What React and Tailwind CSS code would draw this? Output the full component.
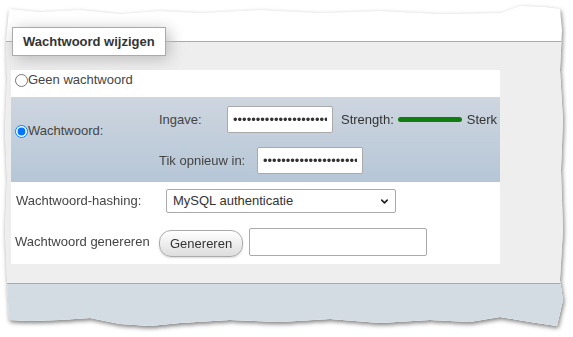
import React from 'react';
import { ChevronDown } from 'lucide-react';

// torn paper outline (page coordinates)
const EDGE = [
  [9, 9], [40, 12], [80, 10], [120, 14], [160, 11], [200, 13], [260, 10], [320, 13], [380, 11], [440, 14], [500, 13], [520, 6], [545, 7], [560, 9],
  [562, 30], [560, 70], [563, 120], [561, 170], [563, 230], [560, 280], [563, 300], [557, 326],
  [530, 322], [500, 317], [470, 322], [430, 320], [380, 323], [330, 319], [280, 322], [230, 320], [180, 323], [150, 326], [120, 324], [90, 318], [60, 320], [30, 321], [9, 320],
  [7, 280], [5, 230], [7, 180], [5, 130], [7, 80], [6, 40],
];

const clip = `polygon(${EDGE.map(([x, y]) => `${x}px ${y}px`).join(', ')})`;

function Radio({ checked, label }) {
  return (
    <label className="flex items-center h-[16px] leading-[16px]">
      <input type="radio" name="nopass" defaultChecked={checked} className="w-[13px] h-[13px] m-0" />
      <span>{label}</span>
    </label>
  );
}

function Pass({ w }) {
  return (
    <input
      type="password"
      readOnly
      value="abcdefghijklmnopqrstuv"
      className={`${w} h-[27px] border border-[#aaa] rounded-[2px] bg-white px-[5px] text-[13px] text-[#333] outline-none`}
    />
  );
}

export default function App() {
  return (
    <div className="w-[573px] h-[337px] bg-white overflow-hidden font-['Liberation_Sans',Arial,sans-serif] text-[13px] text-[#444]">
      <div className="w-full h-full drop-shadow-[1px_2px_2px_rgba(0,0,0,0.5)]">
        <div className="w-full h-full bg-white flex flex-col" style={{ clipPath: clip }}>
          <div className="h-[41px] shrink-0" />
          <div className="flex-1 flex flex-col border-t border-[#aaa] bg-[#eee]">
            <div className="block w-fit -mt-[15px] ml-[12px] border border-[#aaa] bg-white px-[10px] py-[6px] leading-[15px] font-bold text-[#333] shadow-[3px_3px_15px_#bbb]">
              Wachtwoord wijzigen
            </div>

            <div className="mt-[14px] ml-[11px] w-[489px] bg-white">
              <div className="h-[27px] pt-[2px] pl-[4px]">
                <Radio label="Geen wachtwoord" />
              </div>

              <div className="h-[85px] flex bg-[linear-gradient(#ced6df,#b6c6d7)]">
                <div className="w-[148px] pl-[4px] pt-[26px]">
                  <Radio checked label="Wachtwoord:" />
                </div>
                <div className="flex flex-col gap-[14px] pt-[9px]">
                  <div className="flex items-center">
                    <span className="w-[68px]">Ingave:</span>
                    <Pass w="w-[106px]" />
                    <span className="ml-[8px] text-[#333]">Strength:</span>
                    <span className="ml-[4px] w-[64px] h-[5px] rounded-full bg-[#117d11]" />
                    <span className="ml-[5px] text-[#333]">Sterk</span>
                  </div>
                  <div className="flex items-center">
                    <span className="w-[98px]">Tik opnieuw in:</span>
                    <Pass w="w-[106px]" />
                  </div>
                </div>
              </div>

              <div className="h-[40px] flex items-start pt-[7px]">
                <span className="w-[155px] pl-[5px] leading-[24px]">Wachtwoord-hashing:</span>
                <div className="relative w-[230px] h-[24px] border border-[#aaa] rounded-[2px] bg-white flex items-center pl-[6px] text-[#333]">
                  MySQL authenticatie
                  <ChevronDown size={11} strokeWidth={3.5} className="absolute right-[5px] top-[6px] text-[#222]" />
                </div>
              </div>

              <div className="h-[42px] flex items-start pt-[6px]">
                <span className="w-[148px] pl-[4px] leading-[28px]">Wachtwoord genereren</span>
                <button className="mt-[2px] h-[27px] px-[10px] border border-[#aaa] rounded-[12px] bg-[linear-gradient(#fff,#ddd)] text-[#333] shadow-[0_1px_2px_rgba(0,0,0,0.15)]">
                  Genereren
                </button>
                <input
                  type="text"
                  readOnly
                  value=""
                  className="ml-[6px] w-[178px] h-[28px] border border-[#aaa] rounded-[2px] bg-white outline-none"
                />
              </div>
            </div>

            <div className="h-[19px] shrink-0" />
            <div className="flex-1 border-t border-[#aaa] bg-[#d3dce3]" />
          </div>
        </div>
      </div>
    </div>
  );
}
